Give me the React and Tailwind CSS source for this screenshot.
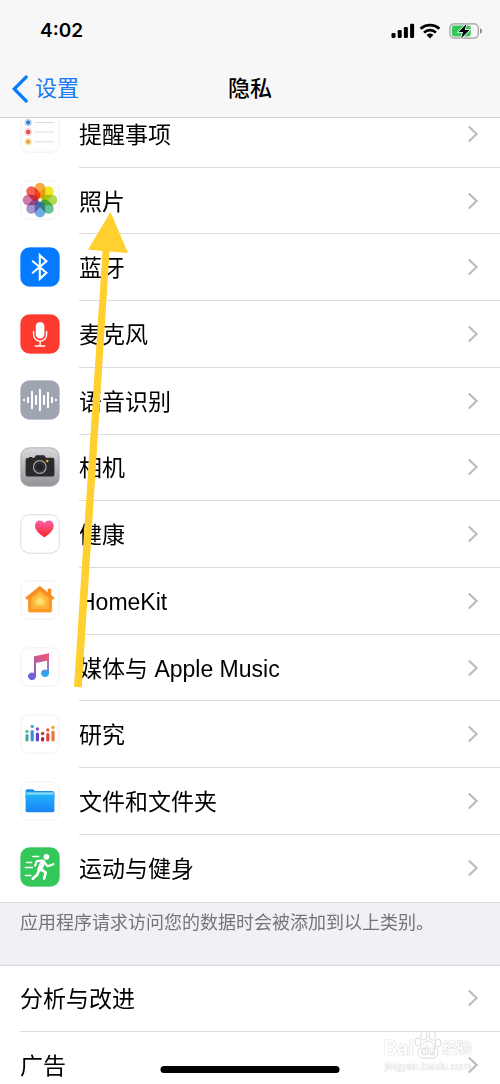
import React from "react";

const tile = "size-10 shrink-0";

function Tile({ fill = "#fff", stroke = "#ececee", children }) {
  return (
    <svg viewBox="0 0 40 40" className={tile} aria-hidden="true">
      <rect x="0.8" y="0.8" width="38.4" height="38.4" rx="8.5" fill={fill} stroke={stroke} strokeWidth="0.8" />
      {children}
    </svg>
  );
}

const RemindersIcon = () => (
  <Tile>
    {[["#2b7fd8", 9.5], ["#e8453c", 19], ["#f0a030", 28.8]].map(([c, y]) => (
      <g key={y}>
        <circle cx="8.2" cy={y} r="3.3" fill="#fff" stroke={c} strokeWidth="0.8" strokeOpacity="0.5" />
        <circle cx="8.2" cy={y} r="2.2" fill={c} />
        <path d={`M15 ${y}H34.5`} stroke="#dcdcde" strokeWidth="1" />
      </g>
    ))}
  </Tile>
);

const petals = ["#f99a1c", "#ece400", "#a4d037", "#4fb883", "#5c9ede", "#9a82c4", "#c8609c", "#f2453a"];
const PhotosIcon = () => (
  <Tile>
    <g style={{ isolation: "isolate" }}>
      {petals.map((c, i) => (
        <rect key={c} x="14.7" y="2.7" width="10.6" height="15.8" rx="5.3" fill={c} fillOpacity="0.85"
          style={{ mixBlendMode: "multiply" }} transform={`rotate(${i * 45} 20 20)`} />
      ))}
    </g>
    <circle cx="20" cy="20" r="1.3" fill="#fff" />
  </Tile>
);

const BluetoothIcon = () => (
  <Tile fill="#047aff" stroke="#047aff">
    <path d="M12.2 13.8 26.4 25.8 19.8 31.8V8.2L26.4 14.2 12.2 26.2" fill="none" stroke="#fff" strokeWidth="2.1" strokeLinejoin="miter" />
  </Tile>
);

const MicrophoneIcon = () => (
  <Tile fill="#fe3b30" stroke="#fe3b30">
    <rect x="15.8" y="8" width="8.6" height="16.6" rx="4.3" fill="#fff" />
    <path d="M13.6 17.4v3.2a6.5 6.5 0 0 0 13 0v-3.2M20.1 27.3v4.5M15.4 32h9.4" fill="none" stroke="#fff" strokeWidth="1.4" strokeLinecap="round" />
  </Tile>
);

const SpeechIcon = () => (
  <Tile fill="#9fa4b1" stroke="#9fa4b1">
    <path d="M4 19.7v.6M8 17.8v4.4M12 11.8v16.4M16 16v8M20 9.8v20.4M24 15.8v8.4M28 12.8v14.4M32 17.8v4.4M36 19.7v.6"
      stroke="#fff" strokeWidth="2.1" strokeLinecap="round" />
  </Tile>
);

const CameraIcon = () => (
  <Tile fill="url(#cameraBack)" stroke="#a5a5aa">
    <defs>
      <linearGradient id="cameraBack" x1="0" y1="0" x2="0" y2="1">
        <stop stopColor="#d9d9dc" /><stop offset="1" stopColor="#929298" />
      </linearGradient>
    </defs>
    <path d="M9 11v-.9h3.3v.9l2-.3L16 8.2h8.2l1.8 2.6h6.4q2 0 2 2v14.6q0 2-2 2H7.6q-2 0-2-2V13q0-2 2-2z" fill="#2a2a2c" />
    <circle cx="19.8" cy="20" r="6.3" fill="#222226" stroke="#a6a6a9" strokeWidth="1.2" />
    <circle cx="19.8" cy="20" r="4.2" fill="none" stroke="#44444a" strokeWidth="0.8" />
    <circle cx="27.3" cy="14" r="1.2" fill="#fdb913" />
  </Tile>
);

const HealthIcon = () => (
  <Tile stroke="#d2d2d4">
    <defs>
      <linearGradient id="heart" x1="0" y1="0" x2="0" y2="1">
        <stop stopColor="#fb61a8" /><stop offset="1" stopColor="#fa2526" />
      </linearGradient>
    </defs>
    <path d="M24.4 23.4C18.2 19.4 15 15.8 15 11.8 15 8.6 17.2 6.4 19.8 6.4c2 0 3.7 1 4.6 2.7.9-1.7 2.5-2.7 4.4-2.7 2.7 0 4.9 2.2 4.9 5.4 0 4-3.1 7.6-9.3 11.6z" fill="url(#heart)" />
  </Tile>
);

const HomeIcon = () => (
  <Tile>
    <defs>
      <linearGradient id="house" x1="0" y1="0" x2="0" y2="1">
        <stop stopColor="#f8871f" /><stop offset="1" stopColor="#fa9d22" />
      </linearGradient>
    </defs>
    <path d="M19.8 6.2 28 12.8V9h3v6.2l3.3 2.7-1.2 1.3H31.7v11.3q0 1.6-1.6 1.6H10q-1.6 0-1.6-1.6V19.2H6.7l-1.2-1.4z" fill="url(#house)" stroke="#f5891c" strokeWidth="0.6" strokeLinejoin="round" />
    <path d="M20 10.6 29 18v11H11V18z" fill="#fcae35" />
    <path d="M20 14 26.5 19.4V26.6H13.5V19.4z" fill="#fdc548" />
    <path d="M20 17.2 23.6 20.2V24.2H16.4V20.2z" fill="#fedf70" />
  </Tile>
);

const MusicIcon = () => (
  <Tile>
    <defs>
      <linearGradient id="note" x1="0.9" y1="0" x2="0.1" y2="1">
        <stop stopColor="#f4566d" /><stop offset="0.4" stopColor="#c45a9c" /><stop offset="1" stopColor="#5a62ee" />
      </linearGradient>
      <linearGradient id="noteStem" x1="0" y1="0" x2="0" y2="1">
        <stop stopColor="#f4566d" /><stop offset="0.5" stopColor="#b074b8" /><stop offset="0.85" stopColor="#2ea4ee" />
      </linearGradient>
    </defs>
    <path d="M14 9.2 29 6.2v7L16 16v13.4a4 3.7 0 1 1-2-3.3z" fill="url(#note)" />
    <path d="M27 8 29 6.2v20.2a4 3.7 0 1 1-2-3.3z" fill="url(#noteStem)" />
  </Tile>
);

const bars = [
  [7, 17.4, 21.7, "#58b88a", "#4da6a0"], [12.2, 12.4, 17.5, "#36a8e0", "#3b8ed8"], [17.4, 15, 20, "#8a4ad0", "#6444c0"],
  [22.6, 19.5, 24.5, "#cc2f3b", "#b91d35"], [27.8, 16, 20.6, "#e8572c", "#dd4a3a"], [33, 13.5, 18, "#f0a030", "#ec7a3c"],
];
const ResearchIcon = () => (
  <Tile>
    {bars.map(([x, dot, top, a, b]) => (
      <g key={x}>
        <circle cx={x} cy={dot} r="1.7" fill={a} />
        <path d={`M${x} ${top}V26`} stroke={b} strokeWidth="3.2" strokeLinecap="round" />
      </g>
    ))}
  </Tile>
);

const FilesIcon = () => (
  <Tile>
    <defs>
      <linearGradient id="folder" x1="0" y1="0" x2="0" y2="1">
        <stop stopColor="#22b4fb" /><stop offset="1" stopColor="#1683f6" />
      </linearGradient>
    </defs>
    <path d="M5.6 10q0-1.8 1.8-1.8h5.4l2.4 1.800h17.200q2 0 2 2v5H5.600z" fill="#1a8fe8" />
    <path d="M6.400 11.400h27.200v4H6.400z" fill="#8fe0f4" />
    <path d="M5.600 13.400h28.800v16q0 1.800-1.800 1.800H7.400q-1.800 0-1.800-1.800z" fill="url(#folder)" />
  </Tile>
);

const FitnessIcon = () => (
  <Tile fill="#34c759" stroke="#34c759">
    <circle cx="26.4" cy="9.8" r="2.9" fill="#fff" />
    <g fill="none" stroke="#fff" strokeLinecap="round" strokeLinejoin="round">
      <path d="M22.8 15 20 22" strokeWidth="5" />
      <path d="M21.5 13.6 16.8 14.2 15 18.6M24.4 15.6l3.2 3.6 5.8-2" strokeWidth="2.2" />
      <path d="M20.8 22.2l5 3.4-1.8 6M19 23l-1.600 4.400-4.600 4.400" strokeWidth="2.7" />
      <path d="M12.8 9.5h5.8M6.600 15.500h5M5.400 20.500h7M5.400 28.500h5.400" strokeWidth="1.6" />
    </g>
  </Tile>
);

const services = [
  ["提醒事项", RemindersIcon],
  ["照片", PhotosIcon],
  ["蓝牙", BluetoothIcon],
  ["麦克风", MicrophoneIcon],
  ["语音识别", SpeechIcon],
  ["相机", CameraIcon],
  ["健康", HealthIcon],
  ["HomeKit", HomeIcon],
  ["媒体与 Apple Music", MusicIcon],
  ["研究", ResearchIcon],
  ["文件和文件夹", FilesIcon],
  ["运动与健身", FitnessIcon],
];

const Chevron = () => (
  <svg viewBox="0 0 12 18" className="h-[18px] w-3 shrink-0" fill="none" stroke="#bcbcc0" strokeWidth="2.2" aria-hidden="true">
    <path d="M1.8 1.5 9.6 9l-7.8 7.5" />
  </svg>
);

function Row({ label, Icon, last }) {
  return (
    <li className="flex min-h-16 flex-1">
      <a href="#" className="flex flex-1 items-stretch pl-5 text-[23px] leading-8 text-black">
        {Icon && <span className="flex w-[59px] shrink-0 items-center pb-0.5"><Icon /></span>}
        <span className={`flex flex-1 items-center justify-between border-b pr-[21px] ${last ? "border-transparent" : "border-[#dcdcde]"}`}>
          <span className="pt-0.5">{label}</span>
          <Chevron />
        </span>
      </a>
    </li>
  );
}

function StatusBar() {
  return (
    <div className="flex h-[62px] items-center justify-between pr-[18px] pl-10">
      <time className="font-[Inter] text-[19px] font-semibold">4:02</time>
      <div className="flex items-center gap-1" aria-hidden="true">
        <svg viewBox="0 0 24 16" className="h-4 w-6">
          <rect x="0.5" y="10" width="4" height="5" rx="1.2" />
          <rect x="6.7" y="7" width="4" height="8" rx="1.2" />
          <rect x="12.9" y="4" width="4" height="11" rx="1.2" />
          <rect x="19.1" y="0.8" width="4" height="14.2" rx="1.2" />
        </svg>
        <svg viewBox="0 0 22 16" className="h-4 w-[22px]" fill="none" stroke="#000" strokeWidth="2.7">
          <path d="M1.6 5.8a13.6 13.6 0 0 1 18.8 0M5 9.6a8.6 8.6 0 0 1 12 0" />
          <path d="M11 15.4 7.6 12a4.8 4.8 0 0 1 6.8 0z" fill="#000" stroke="none" />
        </svg>
        <svg viewBox="0 0 33 16" className="ml-1 h-4 w-[33px]">
          <rect x="0.9" y="0.9" width="28.4" height="14.2" rx="4.2" fill="none" stroke="#9c9c9c" strokeWidth="1.2" />
          <path d="M31 5.2q2 .8 2 2.8t-2 2.8z" fill="#8a8a8a" />
          <rect x="2.8" y="2.6" width="19" height="10.8" rx="2.4" fill="#34c759" />
          <path d="M17.6.8 9.6 9h4.4l-1.9 6.4L20.4 7h-4.7z" fill="#000" stroke="#f7f7f7" strokeWidth="1.6" paintOrder="stroke" />
        </svg>
      </div>
    </div>
  );
}

function Watermark() {
  return (
    <div className="pointer-events-none absolute right-7 bottom-3 flex flex-col items-center text-white [text-shadow:0_0_1px_#c4c4c4,0_0_1px_#c4c4c4]" aria-hidden="true">
      <div className="flex items-end leading-6 font-bold">
        <span className="font-[Inter] text-[20px]">Bai</span>
        <svg viewBox="0 0 28 30" className="h-[30px] w-7" fill="#fff" stroke="#d6d6d6" strokeWidth="0.9">
          <ellipse cx="4" cy="12" rx="3" ry="4" />
          <ellipse cx="10" cy="5.4" rx="3" ry="4.4" />
          <ellipse cx="18.4" cy="5.6" rx="3" ry="4.4" />
          <ellipse cx="24" cy="13" rx="3" ry="4" />
          <path d="M14 11c4 0 5 4 8 7s3 10-3 10H9c-6 0-6-7-3-10s4-7 8-7z" />
          <text x="6.5" y="25" fontSize="12" fontFamily="Inter" fontWeight="600" fill="#fff" stroke="#d0d0d0" strokeWidth="0.5" style={{ textShadow: "none" }}>du</text>
        </svg>
        <span className="text-[15px]">经验</span>
      </div>
      <span className="font-[Inter] text-[10px] leading-3">jingyan.baidu.com</span>
    </div>
  );
}

export default function App() {
  return (
    <div className="relative flex h-screen flex-col overflow-hidden bg-white font-['Liberation_Sans','Noto_Sans_CJK_SC',sans-serif] text-black">
      <header className="z-10 h-[118px] shrink-0 border-b border-[#d4d4d6] bg-[#f7f7f7]">
        <StatusBar />
        <nav className="grid h-[54px] grid-cols-[1fr_auto_1fr] items-center px-3 text-[22px] leading-8">
          <a href="#" className="flex items-center gap-[7px] text-[#1a78f0]">
            <svg viewBox="0 0 16 28" className="h-7 w-4" fill="none" stroke="#087aff" strokeWidth="3.2" strokeLinecap="round" aria-hidden="true">
              <path d="M14.2 2 2.2 14l12 12" />
            </svg>
            设置
          </a>
          <h1 className="font-medium">隐私</h1>
        </nav>
      </header>

      <main className="-mt-[17px] -mb-[15px] flex min-h-0 flex-1 flex-col">
        <ul className="flex flex-[12] flex-col">
          {services.map(([label, Icon], i) => (
            <Row key={label} label={label} Icon={Icon} last={i === services.length - 1} />
          ))}
        </ul>
        <p className="h-16 shrink-0 border-y border-[#dadadd] bg-[#f0f0f5] px-5 pt-2 text-[18px] leading-6 text-[#74747a]">
          应用程序请求访问您的数据时会被添加到以上类别。
        </p>
        <ul className="flex flex-[2] flex-col">
          <Row label="分析与改进" />
          <Row label="广告" last />
        </ul>
      </main>

      <svg viewBox="0 0 60 480" className="pointer-events-none absolute top-[210px] left-[72px] z-20 h-[480px] w-[60px]" aria-hidden="true">
        <path d="M38.5 2 56 43 37.5 41.5 9.8 477.5 2 476.7 30.5 41 16 39.5z" fill="#ffd02f" />
      </svg>
      <Watermark />
      <div className="absolute bottom-[11px] left-1/2 h-[7px] w-[179px] -translate-x-1/2 rounded-full bg-black" />
    </div>
  );
}
